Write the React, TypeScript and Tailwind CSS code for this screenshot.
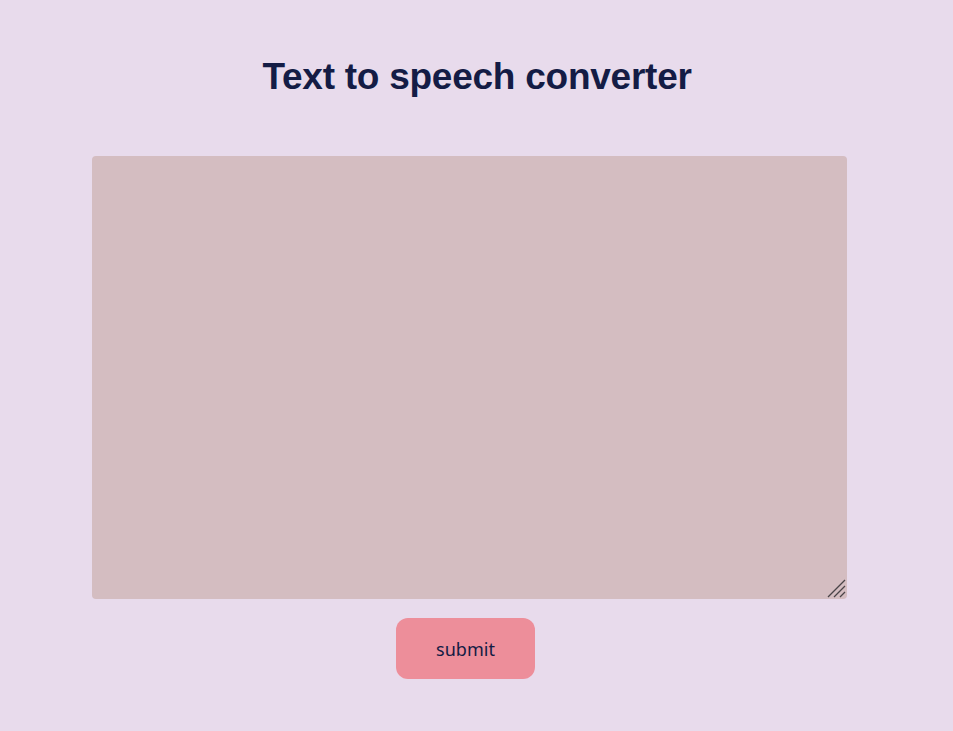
export default function App() {
  return (
    <div className="min-h-[731px] bg-[#e8dbec] flex flex-col items-center">
      <h1 className="mt-[54px] text-[37px] leading-[46px] tracking-[-0.25px] font-bold text-[#141c45] [font-family:'Liberation_Sans',Arial,sans-serif] ml-[1px]">
        Text to speech converter
      </h1>
      <div className="relative mt-[56px] -ml-[14px]">
        <textarea className="w-[755px] h-[443px] bg-[#d4bdc1] rounded-[4px] outline-none border-0 block p-2 resize-none" />
        <svg className="absolute right-[1px] bottom-[1px]" width="19" height="19" viewBox="0 0 19 19">
          <path d="M1 18 L18 1 M7 18 L18 7 M13 18 L18 13" stroke="#4a4448" strokeWidth="1.3" />
        </svg>
      </div>
      <button className="mt-[19px] w-[139px] h-[61px] pt-[2px] rounded-[12px] bg-[#ed8e9a] text-[#141c45] text-[18px] [font-family:'Noto_Sans',sans-serif] -ml-[22px]">
        submit
      </button>
    </div>
  );
}
